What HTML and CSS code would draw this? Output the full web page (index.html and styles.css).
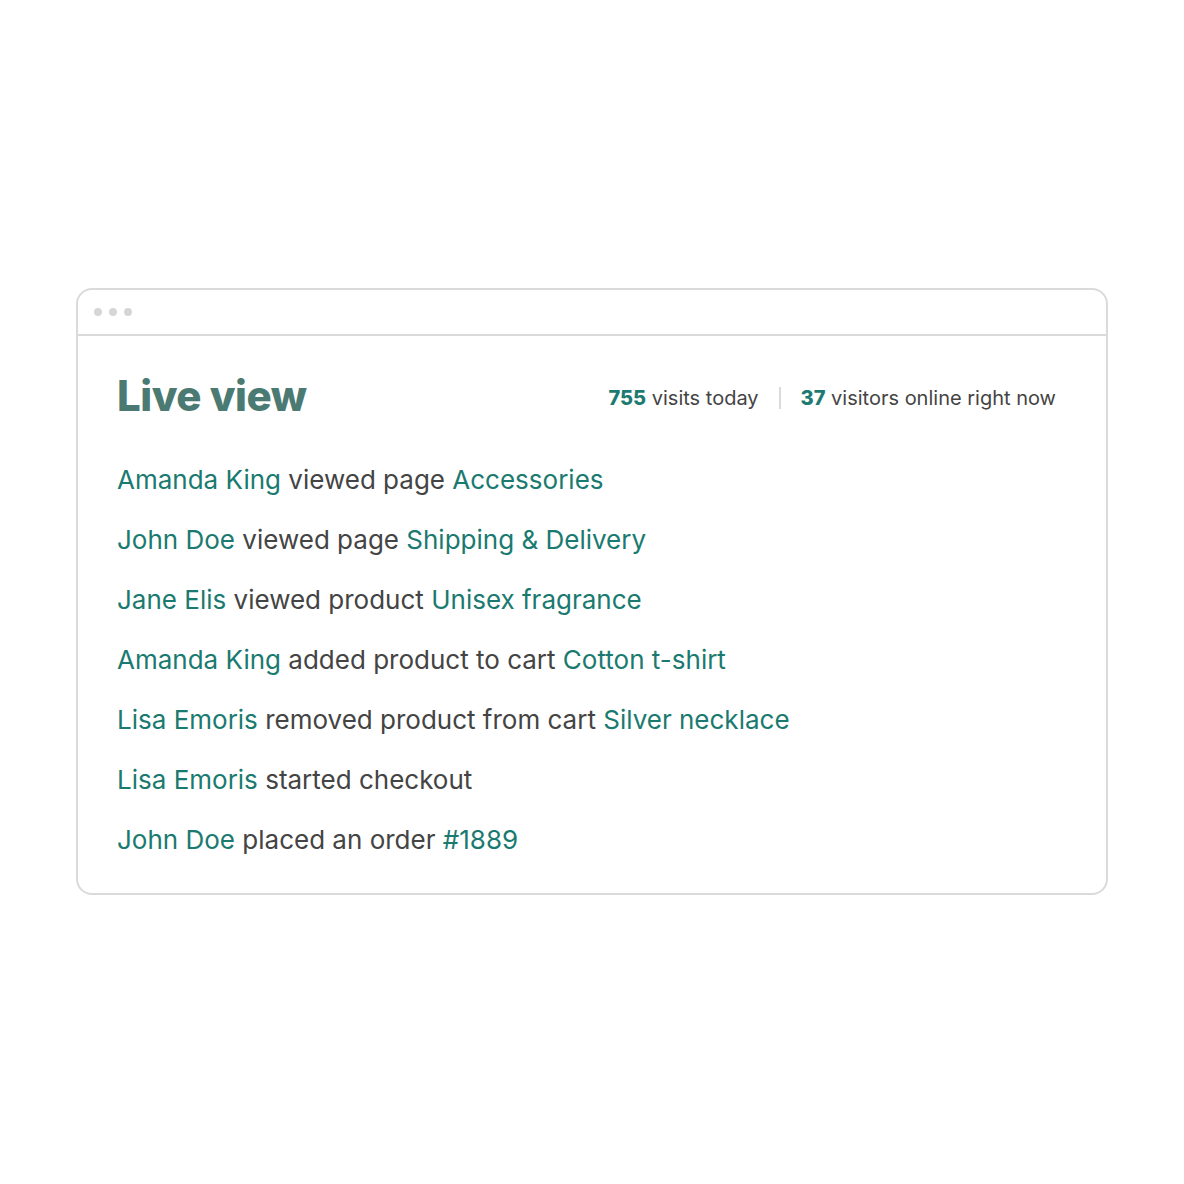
FILE: index.html
```html
<!DOCTYPE html>
<html>
<head>
<meta charset="utf-8">
<link rel="stylesheet" href="styles.css">
</head>
<body>
<div class="page">
  <div class="window">
    <div class="titlebar">
      <span class="dot"></span><span class="dot"></span><span class="dot"></span>
    </div>
    <div class="content">
      <div class="head">
        <h1 class="title">Live view</h1>
        <div class="stats">
          <span><b>755</b> visits today</span>
          <span class="sep"></span>
          <span><b>37</b> visitors online right now</span>
        </div>
      </div>
      <ul class="feed">
        <li><span class="hl">Amanda King</span> viewed page <span class="hl">Accessories</span></li>
        <li><span class="hl">John Doe</span> viewed page <span class="hl">Shipping &amp; Delivery</span></li>
        <li><span class="hl">Jane Elis</span> viewed product <span class="hl">Unisex fragrance</span></li>
        <li><span class="hl">Amanda King</span> added product to cart <span class="hl">Cotton t-shirt</span></li>
        <li><span class="hl">Lisa Emoris</span> removed product from cart <span class="hl">Silver necklace</span></li>
        <li><span class="hl">Lisa Emoris</span> started checkout</li>
        <li><span class="hl">John Doe</span> placed an order <span class="hl">#1889</span></li>
      </ul>
    </div>
  </div>
</div>
</body>
</html>
```

FILE: styles.css
```css
html, body {
  margin: 0;
  padding: 0;
  background: #ffffff;
}
body {
  font-family: "Inter", "Liberation Sans", sans-serif;
  color: #444444;
}
.page {
  padding: 288px 76px 0 76px;
  width: 1032px;
}
.window {
  border: 2px solid #dadada;
  border-radius: 16px;
  box-sizing: border-box;
  width: 1032px;
  height: 607px;
}
.titlebar {
  border-bottom: 2px solid #dadada;
  display: flex;
  align-items: center;
  gap: 7px;
  padding-left: 16px;
  box-sizing: border-box;
  height: 46px;
}
.dot {
  width: 8px;
  height: 8px;
  border-radius: 50%;
  background: #d6d6d6;
}
.content {
  padding: 0 50px 0 39px;
}
.head {
  display: flex;
  justify-content: space-between;
  align-items: center;
  height: 122px;
}
.title {
  margin: -4px 0 0 0;
  font-size: 42px;
  font-weight: 800;
  color: #4b7a73;
  letter-spacing: -0.5px;
}
.stats {
  display: flex;
  align-items: center;
  font-size: 20px;
  color: #444;
  gap: 20px;
  margin-top: 2px;
}
.stats b {
  color: #1d7a70;
  font-weight: 800;
}
.sep {
  width: 2px;
  height: 22px;
  background: #dadada;
}
.feed {
  list-style: none;
  margin: 0;
  padding: 7px 0 0 0;
  font-size: 26px;
}
.feed li {
  height: 60px;
  line-height: 30px;
}
.hl {
  color: #1a7a70;
}
```
